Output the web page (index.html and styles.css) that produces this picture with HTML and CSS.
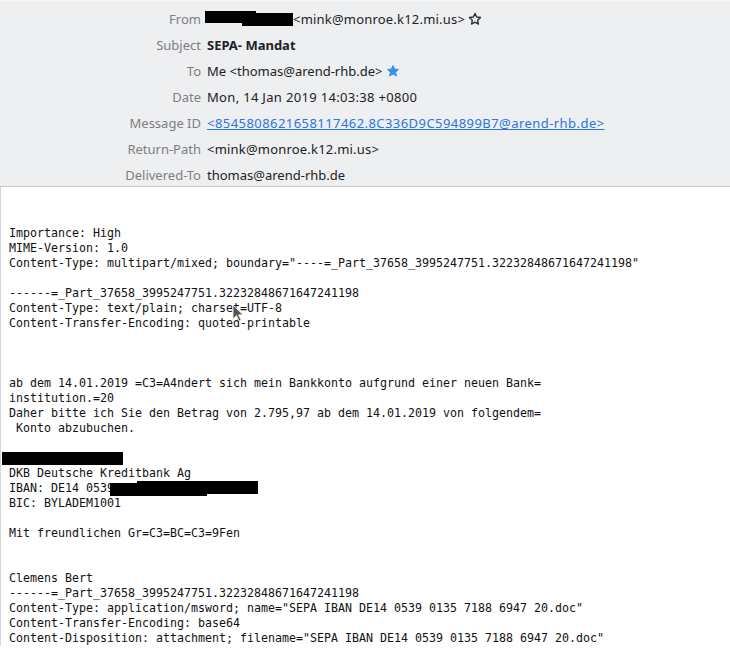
FILE: index.html
```html
<!DOCTYPE html>
<html>
<head>
<meta charset="utf-8">
<link rel="stylesheet" href="styles.css">
</head>
<body>
<div class="header">
  <div class="label">From</div>
  <div class="value"><span class="redact-from"><span class="r1"></span><span class="r2"></span></span><span class="wide1">&lt;mink@monroe.k12.mi.us&gt;</span><svg class="star" viewBox="0 0 24 24" width="14" height="14"><path d="M12 2.5l2.9 6.1 6.6.8-4.9 4.6 1.3 6.6L12 17.3l-5.9 3.3 1.3-6.6-4.9-4.6 6.6-.8z" fill="none" stroke="#2e3033" stroke-width="2.4" stroke-linejoin="round"/></svg></div>
  <div class="label">Subject</div>
  <div class="value bold">SEPA- Mandat</div>
  <div class="label">To</div>
  <div class="value">Me &lt;thomas@arend-rhb.de&gt;<svg class="star" viewBox="0 0 24 24" width="14" height="14"><path d="M12 2.5l2.9 6.1 6.6.8-4.9 4.6 1.3 6.6L12 17.3l-5.9 3.3 1.3-6.6-4.9-4.6 6.6-.8z" fill="#3a8ef0" stroke="#3a8ef0" stroke-width="1.5" stroke-linejoin="round"/></svg></div>
  <div class="label">Date</div>
  <div class="value wide2">Mon, 14 Jan 2019 14:03:38 +0800</div>
  <div class="label">Message ID</div>
  <div class="value"><a class="link" href="#">&lt;8545808621658117462.8C336D9C594899B7@arend-rhb.de&gt;</a></div>
  <div class="label">Return-Path</div>
  <div class="value wide1">&lt;mink@monroe.k12.mi.us&gt;</div>
  <div class="label">Delivered-To</div>
  <div class="value">thomas@arend-rhb.de</div>
</div>
<div class="body">
<pre class="mono">

Importance: High
MIME-Version: 1.0
Content-Type: multipart/mixed; boundary="----=_Part_37658_3995247751.32232848671647241198"

------=_Part_37658_3995247751.32232848671647241198
Content-Type: text/plain; charset=UTF-8
Content-Transfer-Encoding: quoted-printable



ab dem 14.01.2019 =C3=A4ndert sich mein Bankkonto aufgrund einer neuen Bank=
institution.=20
Daher bitte ich Sie den Betrag von 2.795,97 ab dem 14.01.2019 von folgendem=
 Konto abzubuchen.

<span class="redact-name"></span>
DKB Deutsche Kreditbank Ag
IBAN: DE14 0539<span class="redact-iban"><span class="i1"></span><span class="i2"></span></span>
BIC: BYLADEM1001

Mit freundlichen Gr=C3=BC=C3=9Fen


Clemens Bert
------=_Part_37658_3995247751.32232848671647241198
Content-Type: application/msword; name="SEPA IBAN DE14 0539 0135 7188 6947 20.doc"
Content-Transfer-Encoding: base64
Content-Disposition: attachment; filename="SEPA IBAN DE14 0539 0135 7188 6947 20.doc"</pre>
<svg class="cursor" viewBox="0 0 12 18" width="12" height="18"><path d="M1 1v14l3.5-3.5 2.5 5.5 2-1-2.5-5.2H11z" fill="#555" stroke="#eee" stroke-width="0.8"/></svg>
</div>
</body>
</html>
```
FILE: styles.css
```css
html, body {
  margin: 0;
  padding: 0;
  background: #ffffff;
}
.header {
  background: #eeeff1;
  border-bottom: 1px solid #c8c8c8;
  border-top: 1px solid #f6f6f7;
  display: grid;
  grid-template-columns: 201px 1fr;
  column-gap: 6px;
  grid-auto-rows: 26px;
  padding-top: 5px;
  padding-bottom: 0;
  font-family: "Noto Sans", "Open Sans", sans-serif;
  font-size: 13px;
  height: 180px;
  box-sizing: content-box;
}
.label {
  text-align: right;
  color: #7c7e82;
  line-height: 26px;
}
.value {
  color: #202124;
  line-height: 26px;
  display: flex;
  align-items: center;
  white-space: nowrap;
}
.bold {
  font-weight: bold;
}
.wide1 {
  letter-spacing: 0.2px;
}
.wide2 {
  letter-spacing: 0.32px;
}
.link {
  color: #2a76dd;
  text-decoration: underline;
  letter-spacing: 0.44px;
}
.star {
  margin-left: 3px;
}
.redact-from {
  position: relative;
  display: inline-block;
  width: 88px;
  height: 14px;
  margin-left: -2px;
}
.redact-from .r1 {
  position: absolute;
  left: 0;
  top: -1px;
  width: 51px;
  height: 12px;
  background: #000;
}
.redact-from .r2 {
  position: absolute;
  left: 37px;
  top: 1px;
  width: 51px;
  height: 13px;
  background: #000;
}
.body {
  position: relative;
  border-left: 1px solid #d6d6d6;
}
.mono {
  margin: 0;
  padding: 24px 0 0 8px;
  font-family: "DejaVu Sans Mono", monospace;
  font-size: 11.63px;
  line-height: 15px;
  color: #111;
}
.redact-name {
  display: inline-block;
  width: 121px;
  height: 13px;
  background: #000;
  margin-left: -7px;
  vertical-align: -3px;
}
.redact-iban {
  position: relative;
  display: inline-block;
  width: 148px;
  height: 15px;
  margin-left: -4px;
  vertical-align: -4px;
}
.redact-iban .i1 {
  position: absolute;
  left: 0;
  top: 2px;
  width: 97px;
  height: 13px;
  background: #000;
}
.redact-iban .i2 {
  position: absolute;
  left: 27px;
  top: 0;
  width: 121px;
  height: 13px;
  background: #000;
}
.cursor {
  position: absolute;
  left: 231px;
  top: 117px;
}
```
